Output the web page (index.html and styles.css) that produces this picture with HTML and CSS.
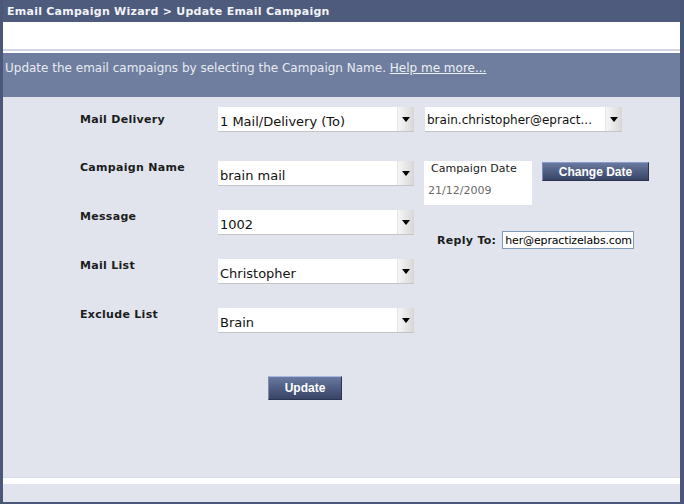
FILE: index.html
```html
<!DOCTYPE html>
<html>
    <head>
        <title>Update Email Campaign</title>
        <link rel="stylesheet" href="styles.css">
    </head>
    <body>
    <div id="frame">
        <div id="titlebar">Email Campaign Wizard &gt; Update Email Campaign</div>
        <div id="whiteband"></div>
        <div id="info">Update the email campaigns by selecting the Campaign Name. <a href="#">Help me more...</a></div>

        <div id="content">
            <div class="row first">
                <label class="lbl">Mail Delivery</label>
                <div class="dd">
                    <select><option>1 Mail/Delivery (To)</option></select>
                    <span class="arrow"></span>
                </div>
                <div class="dd email">
                    <select><option>brain.christopher@epract...</option></select>
                    <span class="arrow"></span>
                </div>
            </div>
            <div class="row">
                <label class="lbl">Campaign Name</label>
                <div class="dd">
                    <select><option>brain mail</option></select>
                    <span class="arrow"></span>
                </div>
                <div id="dateBox">
                    <div class="dateTitle">Campaign Date</div>
                    <div class="dateValue">21/12/2009</div>
                </div>
                <button class="btn" id="changeDate">Change Date</button>
            </div>
            <div class="row">
                <label class="lbl">Message</label>
                <div class="dd">
                    <select><option>1002</option></select>
                    <span class="arrow"></span>
                </div>
                <div id="replyTo">
                    <label>Reply To:</label>
                    <input type="text" value="her@epractizelabs.com"/>
                </div>
            </div>
            <div class="row">
                <label class="lbl">Mail List</label>
                <div class="dd">
                    <select><option>Christopher</option></select>
                    <span class="arrow"></span>
                </div>
            </div>
            <div class="row">
                <label class="lbl">Exclude List</label>
                <div class="dd">
                    <select><option>Brain</option></select>
                    <span class="arrow"></span>
                </div>
            </div>
            <div id="updateDiv"><button class="btn" id="update">Update</button></div>
        </div>

        <div id="footer"></div>
    </div>
    </body>
</html>
```

FILE: styles.css
```css
body{
    margin: 0;
    font-family: "DejaVu Sans", Verdana, sans-serif;
    font-size: 11px;
}
#frame{
    width: 684px;
    height: 504px;
    box-sizing: border-box;
    background-color: #4a5778;
    border-left: 3px solid #4a5778;
    border-right: 4px solid #4a5778;
    border-bottom: 2px solid #4a5778;
    display: flex;
    flex-direction: column;
}
#titlebar{
    height: 22px;
    box-sizing: border-box;
    padding: 2px 0 0 4px;
    line-height: 20px;
    background-color: #4e5b7c;
    color: #f2f4f9;
    font-weight: bold;
    font-size: 11px;
    letter-spacing: 0.25px;
}
#whiteband{
    height: 27px;
    background-color: white;
    border-bottom: 2px solid #d0d5e1;
}
#info{
    height: 46px;
    box-sizing: border-box;
    border-top: 2px solid white;
    padding: 8px 0 0 2px;
    line-height: 14px;
    font-size: 12px;
    background-color: #6f7e9f;
    color: #e8ebf3;
}
#info a{
    color: #eef0f6;
}
#content{
    flex: 1;
    background-color: #e1e4ed;
    padding: 10px 0 0 77px;
}
.row{
    display: flex;
    align-items: flex-start;
    height: 49px;
}
.row.first{
    height: 54px;
}
.lbl{
    width: 138px;
    line-height: 14px;
    font-weight: bold;
    color: #1c1c1c;
    letter-spacing: 0.3px;
}
.row.first .lbl{
    margin-top: 6px;
}
.dd{
    width: 196px;
    height: 25px;
    box-sizing: border-box;
    display: flex;
    background-color: white;
    border-right: 1px solid #d6d6d6;
    border-bottom: 1px solid #c4c4c4;
}
.dd select{
    flex: 1;
    min-width: 0;
    appearance: none;
    border: none;
    outline: none;
    background: white;
    font-family: "DejaVu Sans", Verdana, sans-serif;
    font-size: 13px;
    color: #111;
    padding: 4px 0 0 2px;
    margin: 0;
}
.arrow{
    width: 15px;
    display: flex;
    align-items: center;
    justify-content: center;
    background: linear-gradient(to right, #f6f6f6, #d9d9d9);
    border-left: 1px solid #e4e4e4;
}
.arrow::after{
    content: "";
    border-top: 5px solid #000;
    border-left: 4px solid transparent;
    border-right: 4px solid transparent;
}
.dd.email{
    margin-left: 11px;
    width: 197px;
}
.dd.email select{
    padding-top: 1px;
    font-size: 12px;
}
#dateBox{
    width: 108px;
    height: 44px;
    margin-left: 10px;
    background-color: white;
    box-sizing: border-box;
    padding: 1px 0 0 4px;
}
.dateTitle{
    line-height: 14px;
    padding-left: 3px;
    color: #1a1a1a;
}
.dateValue{
    line-height: 14px;
    margin-top: 8px;
    color: #6a6a6a;
}
.btn{
    font-family: "Liberation Sans", Arial, sans-serif;
    font-weight: bold;
    font-size: 12px;
    color: white;
    background: linear-gradient(#6a79a0, #4f5d82 50%, #3a4566);
    border: 1px solid #2a3450;
    border-top-color: #8b9cc6;
    border-left-color: #7d8db6;
    padding: 0;
    margin: 0;
}
#changeDate{
    width: 107px;
    height: 19px;
    margin: 1px 0 0 10px;
}
#replyTo{
    display: flex;
    align-items: center;
    margin: 21px 0 0 23px;
}
#replyTo label{
    font-weight: bold;
    color: #1c1c1c;
    margin-right: 6px;
    letter-spacing: 0.3px;
}
#replyTo input{
    width: 132px;
    height: 18px;
    box-sizing: border-box;
    border: 1px solid #7f9db9;
    font-family: "DejaVu Sans", Verdana, sans-serif;
    font-size: 11px;
    letter-spacing: -0.15px;
    padding: 0 0 0 2px;
    margin: 0;
}
#updateDiv{
    padding: 19px 0 0 188px;
}
#update{
    width: 74px;
    height: 24px;
    border-top-color: #a8b8e6;
}
#footer{
    height: 25px;
    background-color: #e1e4ed;
    border-top: 1px solid #d6dae4;
    box-sizing: border-box;
}
#footer::before{
    content: "";
    display: block;
    height: 6px;
    background-color: white;
}
```
